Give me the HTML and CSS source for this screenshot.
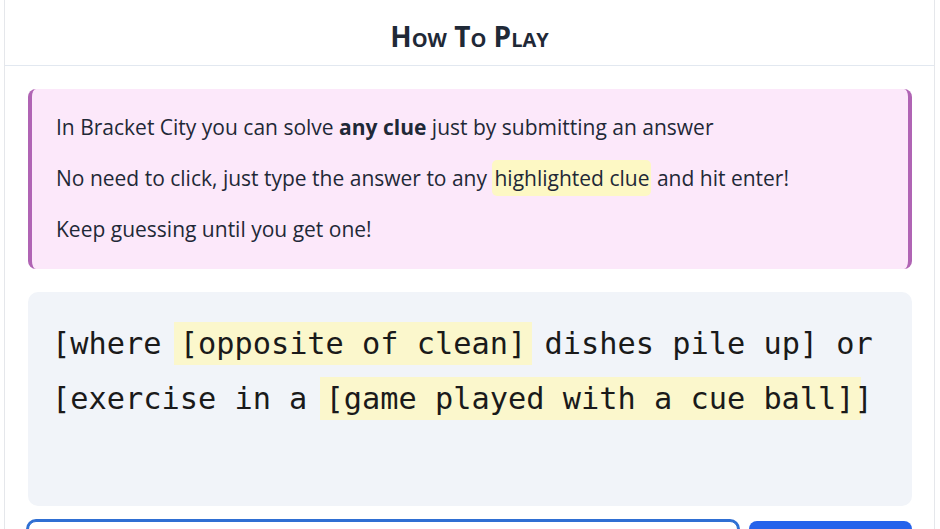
FILE: index.html
```html
<!DOCTYPE html>
<html lang="en">
<head>
    <meta charset="UTF-8">
    <title>Bracket City - How To Play</title>
    <link rel="stylesheet" href="styles.css">
</head>
<body>
    <div class="card">
        <div class="card-header">
            <h2>How To Play</h2>
        </div>
        <div class="card-body">
            <div class="tip">
                <p>In Bracket City you can solve <strong>any clue</strong> just by submitting an answer</p>
                <p>No need to click, just type the answer to any <span class="mark">highlighted clue</span> and hit enter!</p>
                <p>Keep guessing until you get one!</p>
            </div>

            <div class="puzzle">
                [where <span class="clue">[opposite of clean]</span> dishes pile up] or
                [exercise in a <span class="clue">[game played with a cue ball]</span>]
            </div>

            <div class="answer-row">
                <input type="text" id="answer" class="answer-input">
                <button class="submit-btn">Submit</button>
            </div>
        </div>
    </div>
</body>
</html>
```

FILE: styles.css
```css
body {
    margin: 0;
    padding: 0 5px 0 4px;
    font-family: "Open Sans", "Noto Sans", Arial, sans-serif;
    color: #1f2937;
    background: #fff;
}
.card {
    border: 1px solid #e5e7eb;
    border-top: none;
    background: #fff;
}
.card-header {
    height: 65px;
    display: flex;
    align-items: center;
    justify-content: center;
    border-bottom: 1px solid #e2e8f0;
}
.card-header h2 {
    margin: 6px 0 0;
    font-size: 28px;
    font-weight: 700;
    font-variant: small-caps;
    color: #1f2937;
}
.card-body {
    padding: 23px 22px 0 23px;
}
.tip {
    background: #fce8fa;
    border-left: 4px solid #b064b4;
    border-right: 4px solid #b064b4;
    border-radius: 8px;
    padding: 24px 24px 25px;
    display: flex;
    flex-direction: column;
    gap: 22px;
}
.tip p {
    margin: 0;
    font-size: 21px;
    line-height: 29px;
}
.tip strong {
    font-weight: 700;
}
.mark {
    background: #fdf8c4;
    border-radius: 5px;
    padding: 4px 2px;
}
.puzzle {
    margin-top: 23px;
    background: #f1f4f9;
    border-radius: 10px;
    padding: 24px;
    min-height: 166px;
    font-family: "DejaVu Sans Mono", "Liberation Mono", monospace;
    font-size: 30.3px;
    line-height: 55px;
    color: #1a1a1a;
}
/* innermost clues; side shadows widen the highlight without moving text */
.clue {
    background: #fbf7cc;
    padding: 4px 0;
    box-shadow: -6px 0 0 #fbf7cc, 6px 0 0 #fbf7cc;
}
.answer-row {
    display: flex;
    gap: 11px;
    margin-top: 15px;
}
.answer-input {
    flex: 1;
    height: 48px;
    box-sizing: border-box;
    border: 1px solid #2f6fd3;
    border-radius: 8px;
    box-shadow: 0 0 0 2px #2f6fd3;
    outline: none;
    padding: 0 12px;
    font-size: 18px;
}
.submit-btn {
    width: 163px;
    height: 64px;
    border: none;
    border-radius: 8px;
    background: #2563eb;
    color: #fff;
    font-size: 18px;
    font-weight: 600;
    cursor: pointer;
}
```
